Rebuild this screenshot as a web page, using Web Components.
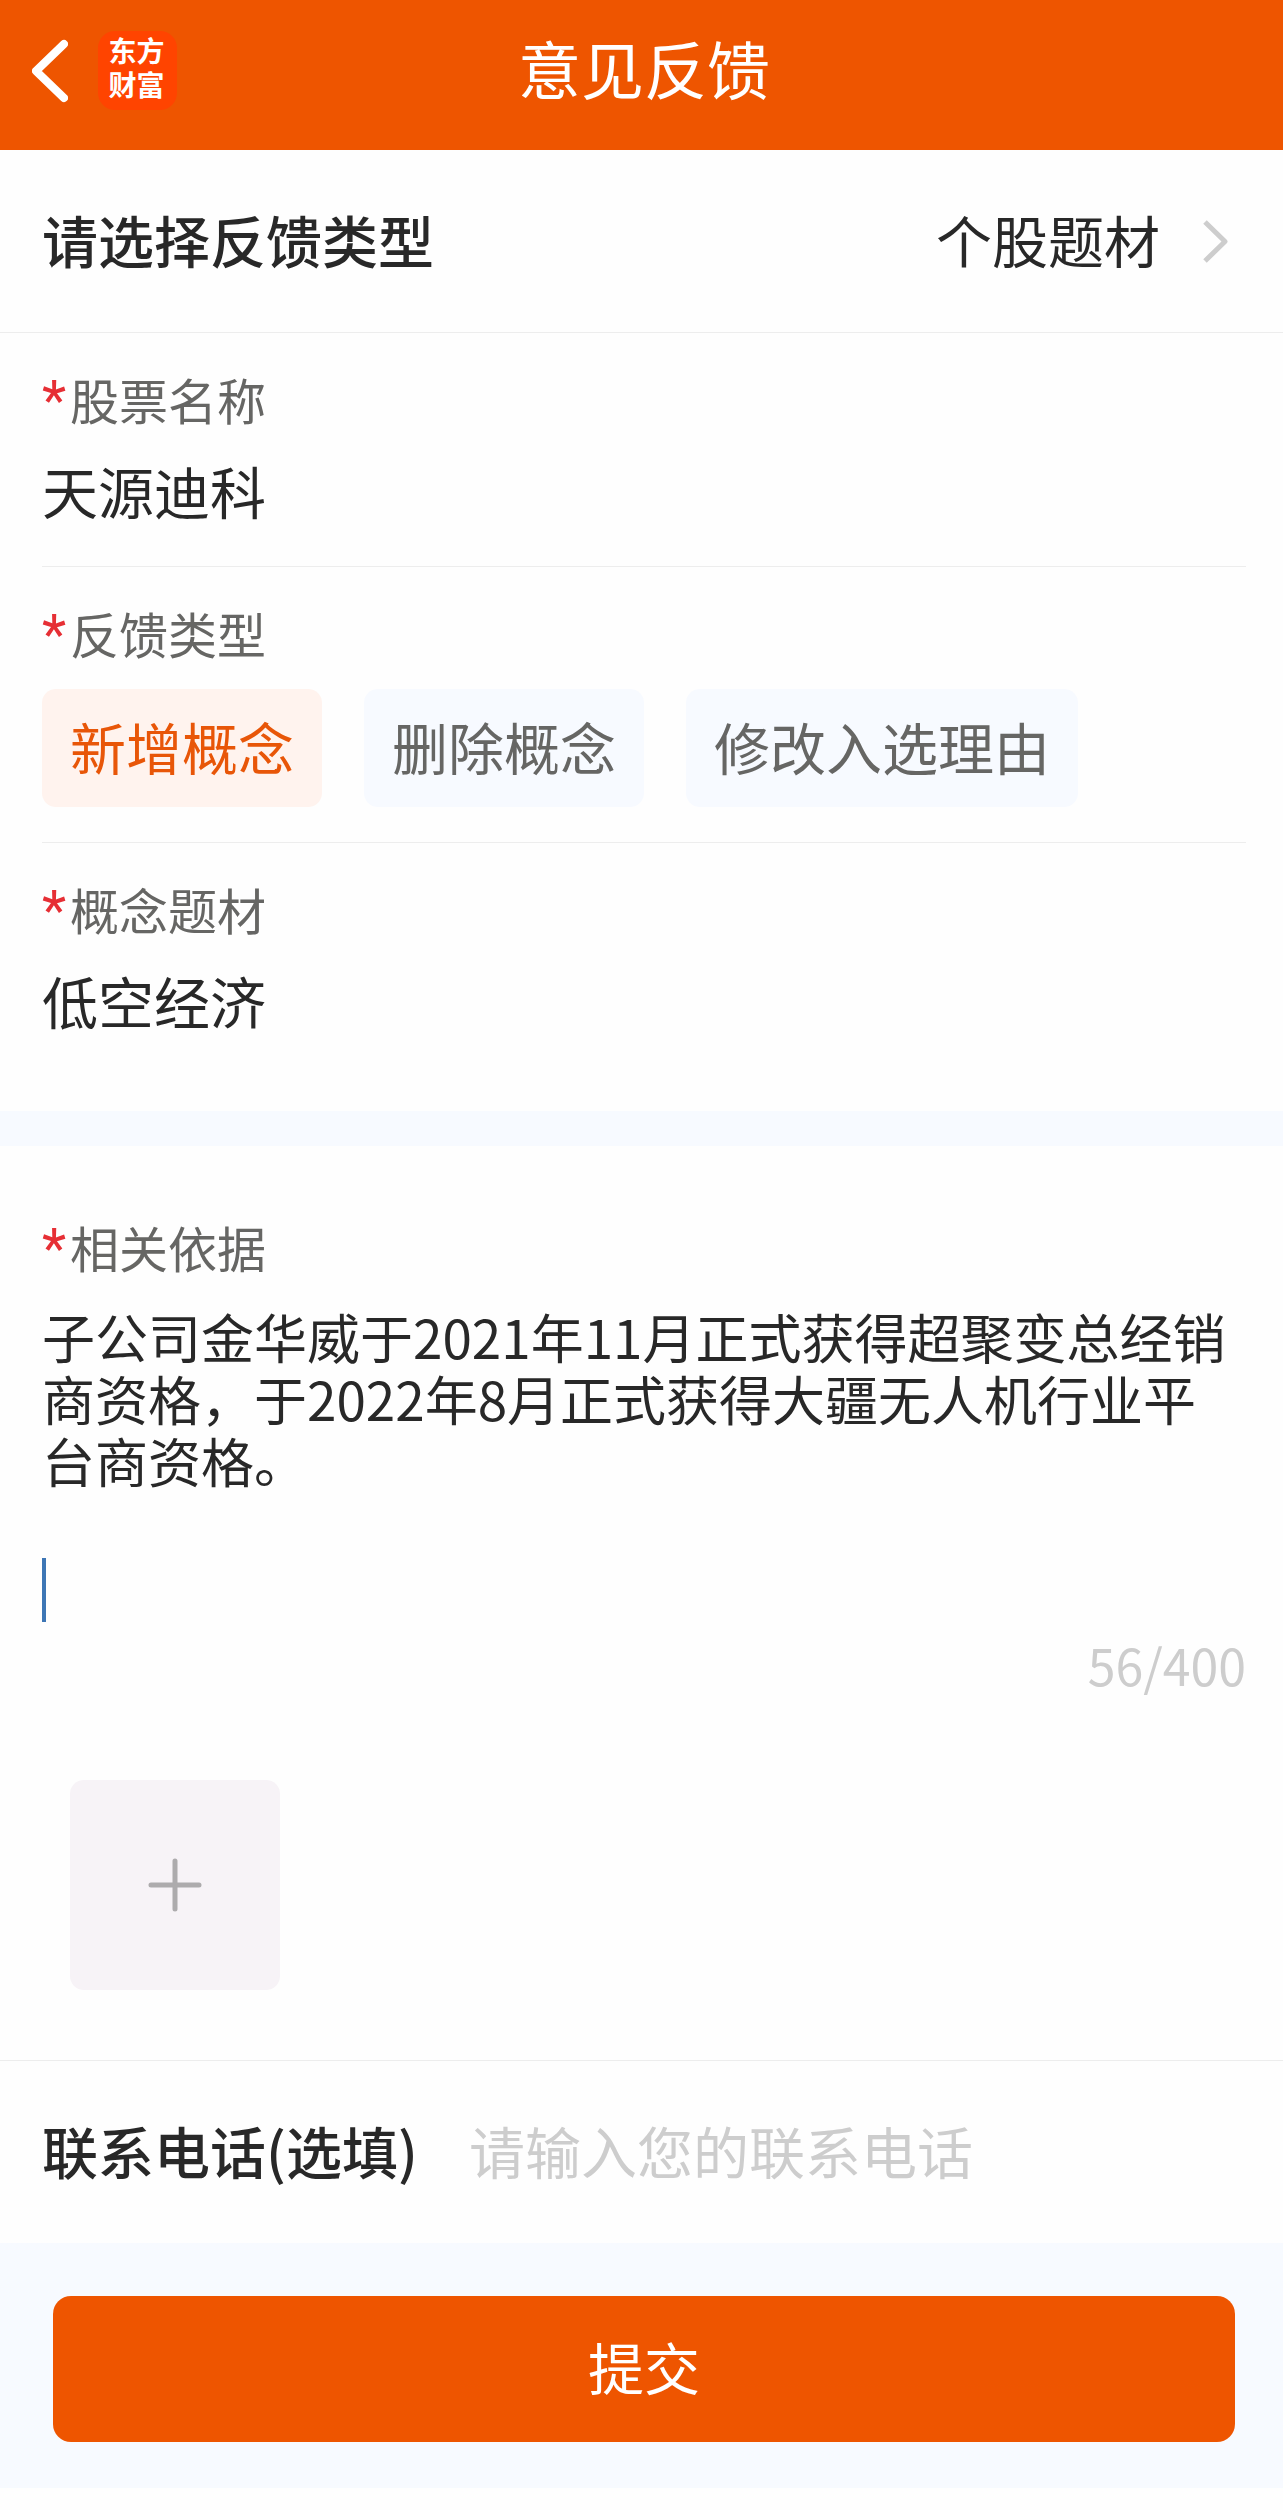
<!DOCTYPE html>
<html lang="zh-CN">
<head>
<meta charset="utf-8">
<meta name="viewport" content="width=device-width, initial-scale=1">
<title>意见反馈</title>
<style>
  body {
    margin: 0;
    background: #fefefe;
    color: #282828;
    font-family: "Noto Sans CJK SC", "Liberation Sans", sans-serif;
    --brand: #ee5500;
    --tint: #f7faff;
    --muted: #666664;
    --faint: #cdcdcd;
    --line: #ededed;
    --pad-start: 42px;
    --pad-end: 37px;
  }
</style>
</head>
<body>
<feedback-page></feedback-page>

<script>
const BASE = `
  *, *::before, *::after { box-sizing: border-box; }
  button, input, select, textarea {
    margin: 0; padding: 0; border: 0; border-radius: 0; outline: 0;
    background: none; color: inherit; font: inherit; appearance: none;
  }
  button, select { cursor: pointer; }
  svg { display: block; }
`;

function define(name, render) {
  customElements.define(name, class extends HTMLElement {
    constructor() {
      super();
      this.attachShadow({ mode: 'open' });
    }
    connectedCallback() {
      const attr = key => this.getAttribute(key) || '';
      this.shadowRoot.innerHTML = `<style>${BASE}</style>` + render(attr);
    }
  });
}

define('app-logo', () => `
  <style>
    :host {
      display: flex; flex-direction: column; align-items: center; justify-content: center;
      box-sizing: border-box; width: 79px; height: 79px; padding: 0 2px 2px 0; border-radius: 17px;
      background: #ff4400; color: #fff;
      font-family: "Liberation Sans", "Noto Sans CJK SC", sans-serif;
      font-size: 28px; line-height: 34px; font-weight: 700;
    }
  </style>
  <span>东方</span>
  <span>财富</span>
`);

define('app-header', () => `
  <style>
    :host {
      display: grid; grid-template-columns: 1fr auto 1fr; align-items: center;
      box-sizing: border-box; height: 150px; padding: 0 27px 9px 32px;
      background: var(--brand); color: #fff;
    }
    nav { display: flex; align-items: center; gap: 30px; }
    h1 { margin: 0; padding-bottom: 7px; font-size: 63px; line-height: 80px; font-weight: 400; }
  </style>
  <nav>
    <button type="button" aria-label="返回">
      <svg width="36" height="64" viewBox="0 0 36 64" fill="none" stroke="#fff" stroke-width="8" stroke-linecap="round" stroke-linejoin="round"><path d="M32 5 4 32 32 59"/></svg>
    </button>
    <app-logo></app-logo>
  </nav>
  <h1><slot></slot></h1>
`);

define('type-row', attr => `
  <style>
    :host {
      display: flex; align-items: center; justify-content: space-between;
      box-sizing: border-box; height: 183px; padding: 0 55px 0 var(--pad-start);
      border-bottom: 1px solid var(--line);
      font-size: 56px; line-height: 80px;
    }
    label { padding-bottom: 5px; font-weight: 500; }
    div { display: flex; align-items: center; gap: 43px; }
    select { height: 85px; padding-bottom: 5px; }
  </style>
  <label for="type">${attr('label')}</label>
  <div>
    <select id="type"><option>${attr('value')}</option></select>
    <svg width="25" height="43" viewBox="0 0 25 43" fill="none" stroke="#cdcdcd" stroke-width="5" stroke-linejoin="round"><path d="M2 2 22 21.5 2 41"/></svg>
  </div>
`);

define('required-mark', () => `
  <style>
    :host {
      display: block; width: 28px; color: #e62f35;
      font-family: Roboto, sans-serif; font-size: 56px; line-height: 56px;
    }
  </style>*`);

const FIELD = `
  :host { display: block; padding: 0 var(--pad-end) 0 var(--pad-start); }
  .body { padding: 31px 0 35px; border-bottom: 1px solid var(--line); }
  :host([last]) .body { padding-bottom: 70px; border-bottom: 0; }
  .label { display: flex; align-items: baseline; height: 70px; color: var(--muted); font-size: 49px; line-height: 70px; }
`;

define('text-field', attr => `
  <style>
    ${FIELD}
    input { display: block; width: 100%; height: 82px; margin-top: 15px; font-size: 56px; line-height: 82px; }
  </style>
  <div class="body">
    <label class="label" for="value"><required-mark></required-mark>${attr('label')}</label>
    <input id="value" type="text" value="${attr('value')}">
  </div>
`);

define('choice-chip', () => `
  <style>
    :host { display: block; }
    button {
      display: block; height: 118px; padding: 0 28px 5px; border-radius: 14px;
      background: var(--tint); color: var(--muted); font-size: 56px; line-height: 80px;
    }
    :host([selected]) button { background: #fff3ee; color: #e85608; }
  </style>
  <button type="button"><slot></slot></button>
`);

define('choice-field', attr => `
  <style>
    ${FIELD}
    .chips { display: flex; flex-wrap: wrap; gap: 42px; margin-top: 21px; }
  </style>
  <div class="body">
    <div class="label" id="name"><required-mark></required-mark>${attr('label')}</div>
    <div class="chips" role="group" aria-labelledby="name"><slot></slot></div>
  </div>
`);

define('evidence-field', attr => `
  <style>
    :host {
      display: block; padding: 66px var(--pad-end) 70px var(--pad-start);
      border-top: 35px solid var(--tint); border-bottom: 1px solid var(--line);
    }
    .label { display: flex; align-items: baseline; height: 70px; color: var(--muted); font-size: 49px; line-height: 70px; }
    .editor { position: relative; margin-top: 23px; }
    textarea {
      display: block; width: 100%; height: 310px; resize: none; overflow: hidden;
      font-size: 53px; line-height: 62px;
    }
    .caret { position: absolute; left: 0; bottom: -7px; width: 4px; height: 64px; background: #3d76b5; }
    .count { margin-top: 14px; text-align: right; color: var(--faint); font-size: 50px; line-height: 70px; }
    .upload {
      display: flex; align-items: center; justify-content: center;
      width: 210px; height: 210px; margin: 81px 0 0 28px; border-radius: 14px; background: #f7f3f7;
    }
  </style>
  <label class="label" for="text"><required-mark></required-mark>${attr('label')}</label>
  <div class="editor">
    <textarea id="text" maxlength="400" spellcheck="false">子公司金华威于2021年11月正式获得超聚变总经销商资格，于2022年8月正式获得大疆无人机行业平台商资格。

</textarea>
    <span class="caret"></span>
  </div>
  <div class="count">56/400</div>
  <button class="upload" type="button" aria-label="添加图片">
    <svg width="54" height="54" viewBox="0 0 54 54" fill="none" stroke="#adabad" stroke-width="5" stroke-linecap="round"><path d="M27 3V51M3 27H51"/></svg>
  </button>
`);

define('phone-row', attr => `
  <style>
    :host {
      display: flex; align-items: center; gap: 51px;
      box-sizing: border-box; height: 182px; padding: 0 var(--pad-end) 5px var(--pad-start);
      font-size: 56px; line-height: 80px;
    }
    label { font-weight: 500; white-space: nowrap; }
    input { flex: 1; min-width: 0; height: 82px; }
    input::placeholder { color: var(--faint); opacity: 1; }
  </style>
  <label for="phone">${attr('label')}</label>
  <input id="phone" type="tel" placeholder="${attr('placeholder')}">
`);

define('submit-bar', () => `
  <style>
    :host { display: block; padding: 53px 48px 46px 53px; background: var(--tint); }
    button {
      display: block; width: 100%; height: 146px; padding-bottom: 6px; border-radius: 18px;
      background: var(--brand); color: #fff; font-size: 56px; line-height: 80px;
    }
  </style>
  <button type="submit"><slot></slot></button>
`);

define('feedback-page', () => `
  <style>:host { display: block; }</style>
  <app-header>意见反馈</app-header>
  <main>
    <type-row label="请选择反馈类型" value="个股题材"></type-row>
    <text-field label="股票名称" value="天源迪科"></text-field>
    <choice-field label="反馈类型">
      <choice-chip selected>新增概念</choice-chip>
      <choice-chip>删除概念</choice-chip>
      <choice-chip>修改入选理由</choice-chip>
    </choice-field>
    <text-field last label="概念题材" value="低空经济"></text-field>
    <evidence-field label="相关依据"></evidence-field>
    <phone-row label="联系电话(选填)" placeholder="请输入您的联系电话"></phone-row>
    <submit-bar>提交</submit-bar>
  </main>
`);
</script>
</body>
</html>
